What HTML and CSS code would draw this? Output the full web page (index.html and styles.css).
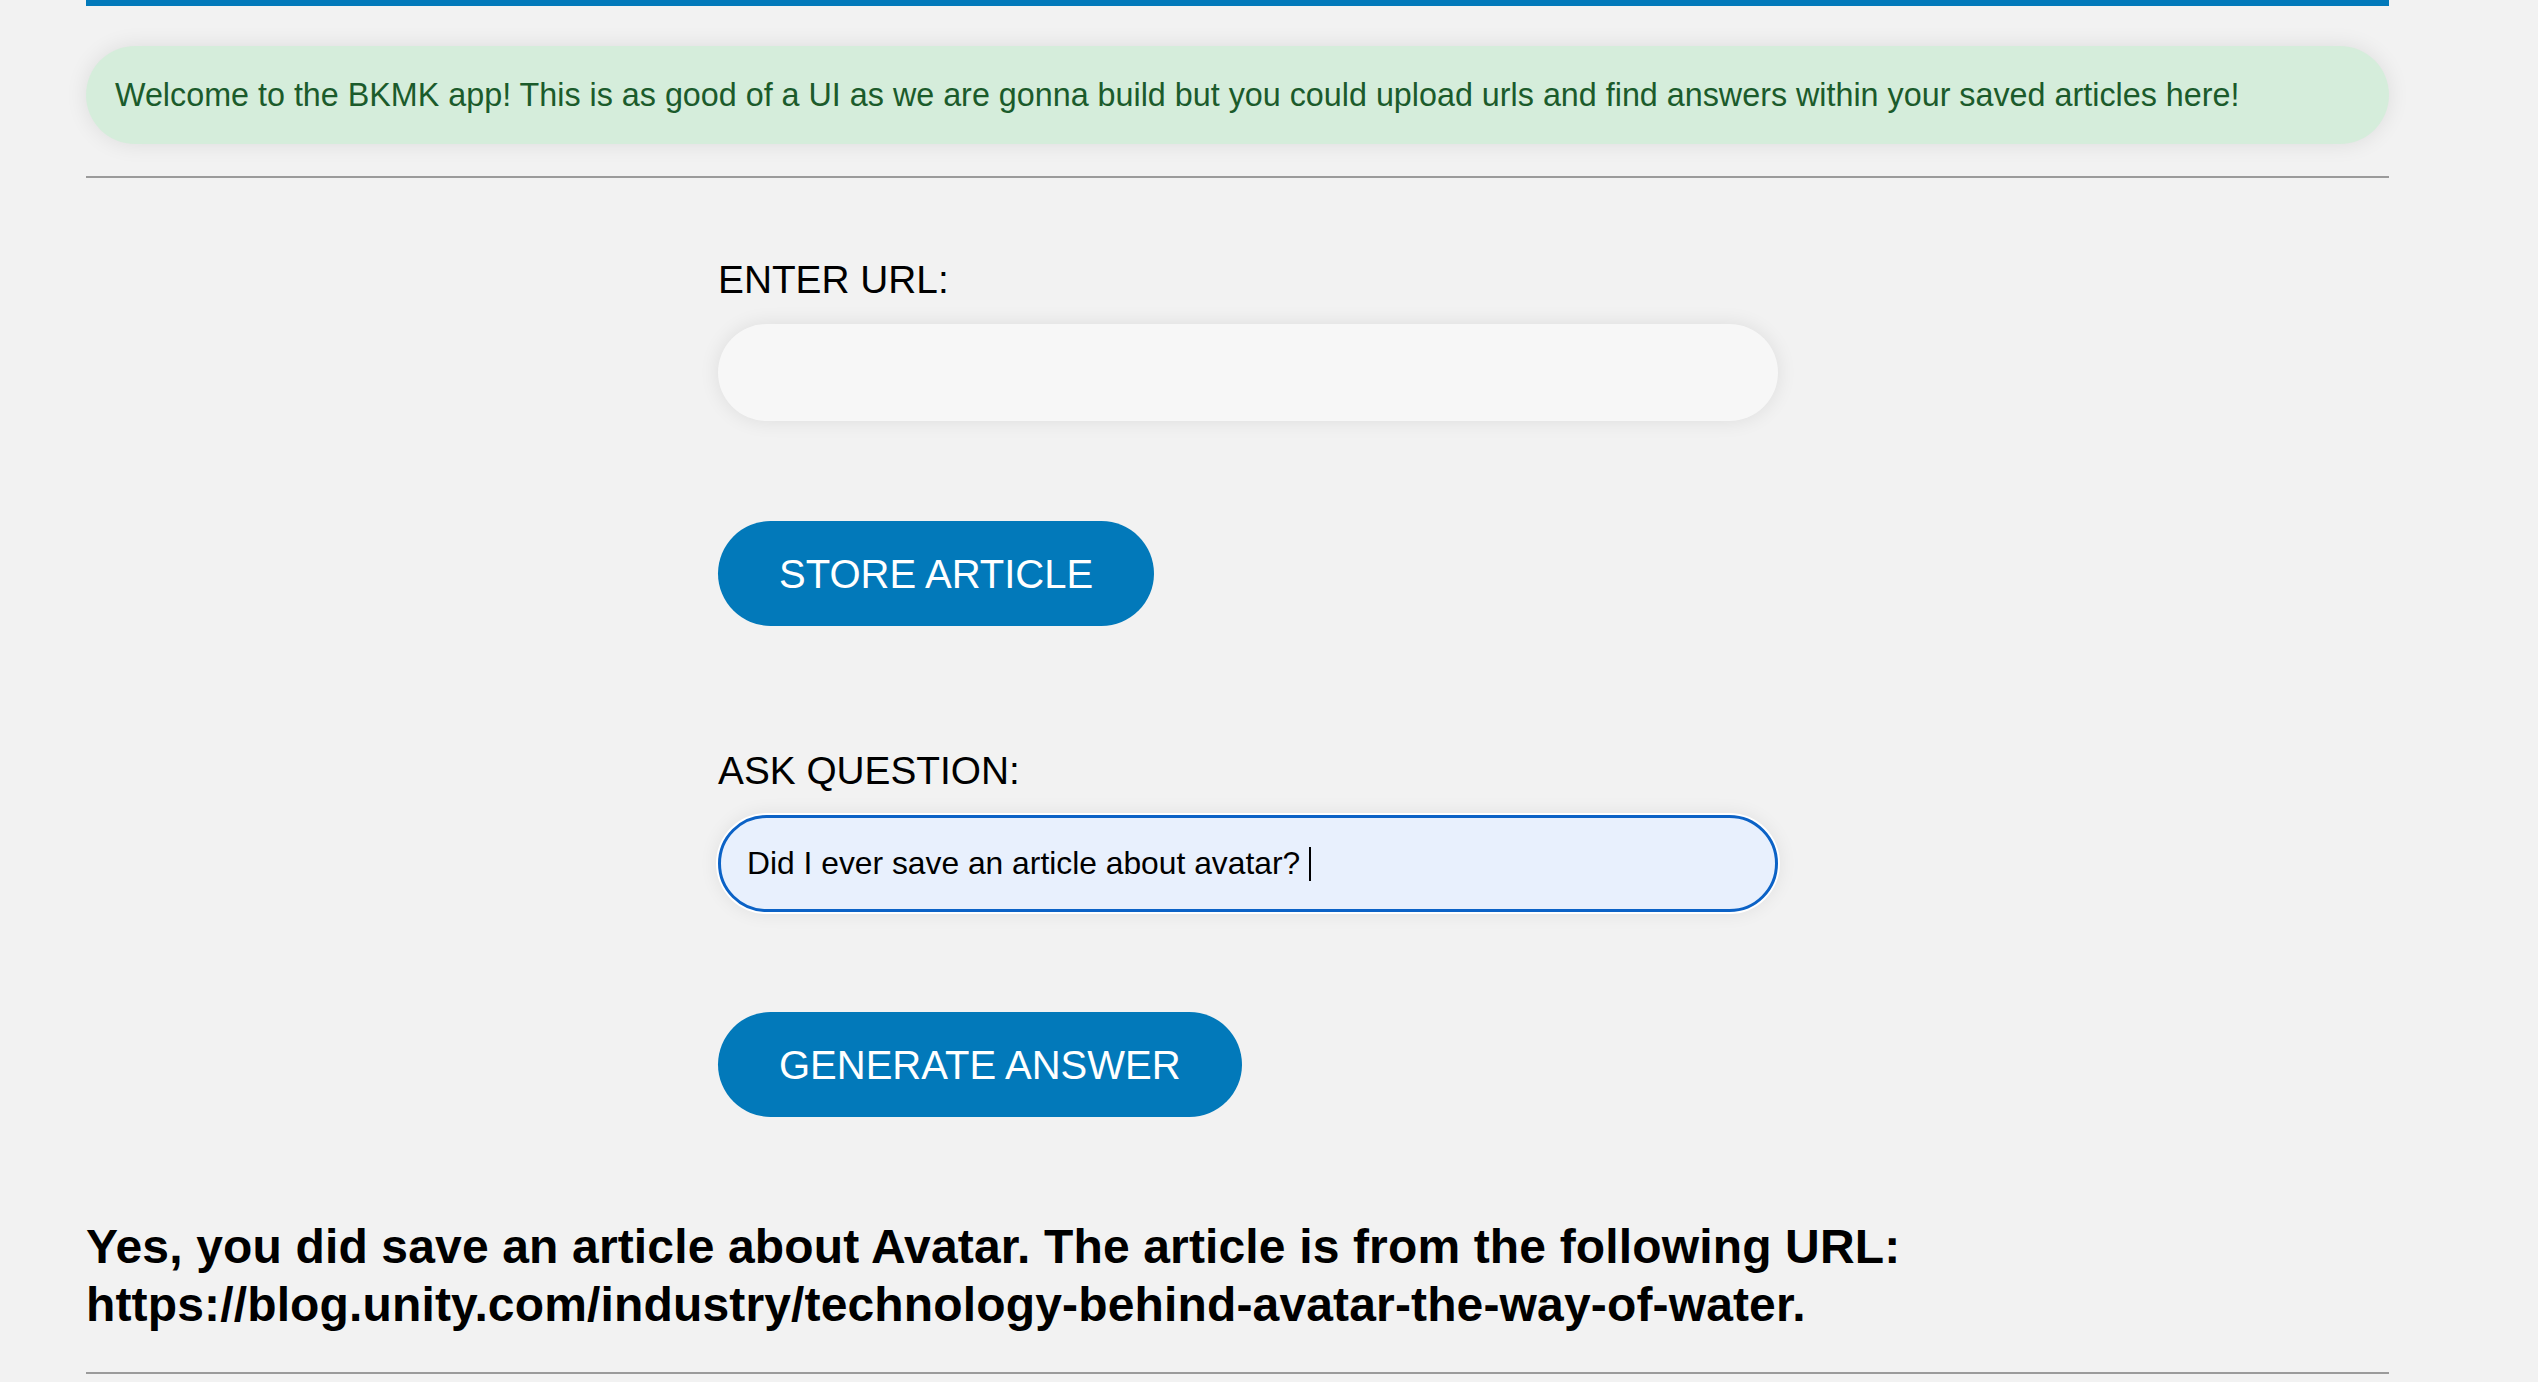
FILE: index.html
```html
<!DOCTYPE html>
<html lang="en">
<head>
<meta charset="utf-8">
<title>BKMK</title>
<link rel="stylesheet" href="styles.css">
</head>
<body>
<div class="page">
  <div class="topbar"></div>
  <div class="banner">Welcome to the BKMK app! This is as good of a UI as we are gonna build but you could upload urls and find answers within your saved articles here!</div>
  <hr class="rule">
  <form class="form">
    <label class="label">ENTER URL:</label>
    <div class="field"></div>
    <button type="button" class="btn">STORE ARTICLE</button>
    <label class="label label-ask">ASK QUESTION:</label>
    <div class="field field-focus">Did I ever save an article about avatar?&nbsp;<span class="caret"></span></div>
    <button type="button" class="btn">GENERATE ANSWER</button>
  </form>
  <p class="answer">Yes, you did save an article about Avatar. The article is from the following URL: https://blog.unity.com/industry/technology-behind-avatar-the-way-of-water.</p>
  <hr class="rule rule-bottom">
</div>
</body>
</html>
```
FILE: styles.css
```css
html, body {
  margin: 0;
  padding: 0;
  background: #f2f2f2;
  font-family: "Liberation Sans", Arial, Helvetica, sans-serif;
  color: #000;
}

.page {
  margin-left: 86px;
  width: 2303px;
}

.topbar {
  height: 6px;
  background: #0279ba;
}

.banner {
  margin-top: 40px;
  height: 98px;
  box-sizing: border-box;
  padding: 0 29px;
  display: flex;
  align-items: center;
  background: #d5eddb;
  color: #1b5b2b;
  font-size: 32.3px;
  border-radius: 49px;
  box-shadow: 0 0 22px rgba(0, 0, 0, 0.09);
}

.rule {
  margin: 32px 0 0;
  border: 0;
  height: 2px;
  background: #9b9b9b;
}

.form {
  display: flex;
  flex-direction: column;
  align-items: flex-start;
  padding-left: 632px;
  margin-top: 79px;
}

.label {
  font-size: 38.8px;
  line-height: 46px;
}

.label-ask {
  margin-top: 122px;
}

.field {
  margin-top: 21px;
  width: 1060px;
  height: 97px;
  box-sizing: border-box;
  border-radius: 49px;
  background: #f7f7f7;
  box-shadow: 0 0 20px rgba(0, 0, 0, 0.09);
  display: flex;
  align-items: center;
  padding-left: 29px;
  font-size: 31.8px;
  white-space: pre;
}

.field-focus {
  background: #e8f0fd;
  border: 3px solid #0b62c6;
  padding-left: 26px;
  box-shadow: 0 0 0 2px #ffffff, 0 0 20px rgba(0, 0, 0, 0.09);
}

.caret {
  display: inline-block;
  width: 2px;
  height: 34px;
  background: #000;
}

.btn {
  margin-top: 100px;
  height: 105px;
  padding: 0 61px;
  border: 0;
  border-radius: 53px;
  background: #0279ba;
  color: #fff;
  font-family: "Liberation Sans", Arial, Helvetica, sans-serif;
  font-size: 40px;
  line-height: 46px;
}

.answer {
  margin: 101px 0 0;
  font-size: 48px;
  line-height: 58px;
  font-weight: bold;
  width: 1900px;
  letter-spacing: 0.15px;
}

.rule-bottom {
  margin-top: 38px;
}
```
